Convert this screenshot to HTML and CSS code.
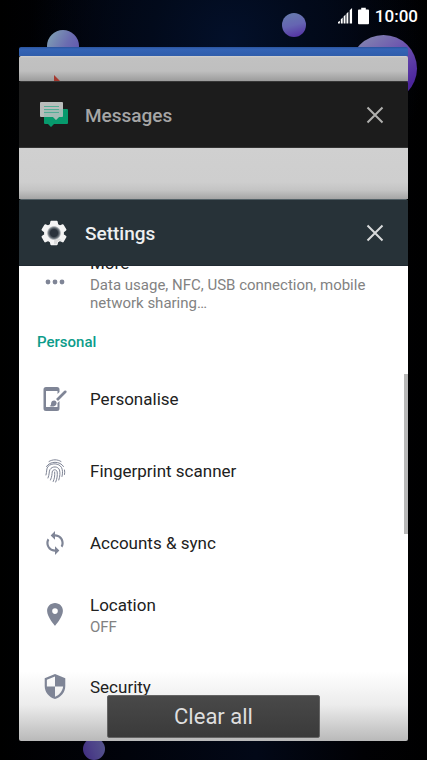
FILE: index.html
```html
<!DOCTYPE html>
<html lang="en">
<head>
<meta charset="utf-8">
<meta name="viewport" content="width=device-width, initial-scale=1">
<title>Recent apps</title>
<link rel="stylesheet" href="styles.css">
</head>
<body>
<div class="screen">
  <div class="wallpaper" aria-hidden="true">
    <span class="planet planet-left"></span>
    <span class="planet planet-top"></span>
    <span class="planet planet-right"></span>
    <span class="planet planet-bottom"></span>
  </div>

  <header class="status">
    <svg class="signal" viewBox="0 0 16 17" aria-label="Signal"><path fill="#fff" d="M0 17v-1.500l2-1.500V17zM3 17v-4.500l2-2V17zM6 17V9.500l2-2V17zM9 17V6.500l2-2V17zM12.500 17V3L15 .5V17z"/></svg>
    <svg class="battery" viewBox="0 0 12 18" aria-label="Battery"><path fill="#fff" d="M3.500 0h5v2H11q1 0 1 1v14q0 1-1 1H1q-1 0-1-1V3q0-1 1-1h2.500z"/></svg>
    <time class="clock">10:00</time>
  </header>

  <main class="stack">
    <section class="card card-blue"></section>
    <section class="card card-grey">
      <svg class="flag" viewBox="0 0 7 7" aria-hidden="true"><path fill="#a5392f" d="M0 0l7 7H0z"/></svg>
    </section>

    <section class="card card-messages">
      <div class="card-head">
        <svg class="app-icon" viewBox="0 0 30 30" aria-hidden="true">
          <path fill="#079a6d" d="M6 9h22q1 0 1 1v13q0 1-1 1H15l-3 3-3-3H6q-1 0-1-1V10z"/>
          <path fill="#b9bdbc" d="M2 2h21q1 0 1 1v13q0 1-1 1h-3l-3 3-3-3H2q-1 0-1-1V3q0-1 1-1z"/>
          <path fill="#5db79f" d="M5 9h19v7q0 1-1 1h-3l-3 3-3-3H5z" opacity=".25"/>
          <path stroke="#51ad96" stroke-width="1" d="M5 6.500h15M5 9.500h15M5 12.500h15"/>
        </svg>
        <h2 class="app-name">Messages</h2>
        <button class="close" type="button" aria-label="Dismiss Messages"><svg viewBox="0 0 18 18"><path d="M1.500 1.500l15 15m0-15l-15 15"/></svg></button>
      </div>
      <div class="peek"></div>
    </section>

    <section class="card card-settings">
      <div class="card-head">
        <svg class="app-icon" viewBox="-1.500 -1 33 33" aria-hidden="true">
          <defs><radialGradient id="hub"><stop offset=".5" stop-color="#2b333c"/><stop offset=".75" stop-color="#6b737a"/><stop offset="1" stop-color="#f2f2f2"/></radialGradient></defs>
          <path fill="#f4f4f4" stroke="#f4f4f4" stroke-width="2" stroke-linejoin="round" d="M12 3h6l.7 3.600 2.600 1.500 3.400-1.300 3 5.200-2.800 2.300v3l2.800 2.300-3 5.200-3.400-1.300-2.600 1.500L18 28h-6l-.7-3-2.600-1.500-3.400 1.300-3-5.200 2.800-2.300v-3L2.300 12l3-5.200 3.400 1.300 2.600-1.500z"/>
          <path fill="#dcdcdc" d="M19 20l5.700 4.800-3.400-1.300-2.600 1.500L18 28h-3v-6z"/>
          <circle cx="15" cy="15.500" r="8" fill="url(#hub)"/>
        </svg>
        <h2 class="app-name">Settings</h2>
        <button class="close" type="button" aria-label="Dismiss Settings"><svg viewBox="0 0 18 18"><path d="M1.500 1.500l15 15m0-15l-15 15"/></svg></button>
      </div>
      <div class="viewport">
        <div class="more">
          <svg class="icon" viewBox="0 0 24 24" aria-hidden="true"><circle cx="5" cy="12" r="2.400"/><circle cx="12" cy="12" r="2.400"/><circle cx="19" cy="12" r="2.400"/></svg>
          <div class="label"><span class="title">More</span><span class="note">Data usage, NFC, USB connection, mobile network sharing…</span></div>
        </div>
        <h3 class="group">Personal</h3>
        <ul class="rows">
          <li class="row">
            <svg class="icon" viewBox="0 0 24 26" aria-hidden="true"><path d="M3 1H14q2.500 0 2.500 2.500V6L14.500 8V5H3v16h11.500v-4l2-2v7.500Q16.500 25 14 25H3Q.5 25 .5 22.500v-19Q.5 1 3 1z"/><path d="M21.300 4.800q1-.8 1.900 0t0 1.900l-8.200 8.300-2-2zM11.200 14.500c2 .2 3 2 2 4-1.200 2.300-4.200 2.500-6.700 1.500 2-.5 1.300-2 1.700-3.300.4-1.500 1.600-2.300 3-2.200z"/></svg>
            <div class="label"><span class="title">Personalise</span></div>
          </li>
          <li class="row">
            <svg class="icon icon-line" viewBox="0 0 24 26" aria-hidden="true"><path d="M6 3.500C9.500 1.200 14.500 1.200 18 3.500M3.500 8.500C7 2.800 17 2.800 20.500 8.500M3 17c1-4 .3-6.500 2-8.500C8.500 4.700 16 5 18.500 9.500c1 2 1.500 5 .5 9M5 20c1.700-4 .8-6.500 2-8.500C9.300 8 15 8 16.500 12c.8 3 .5 6-.7 10M7.500 22c1.500-3.500 1.500-6 1.700-8 .5-3 4.500-3 5 0 .3 3.500 0 6.500-1.500 10M11.700 14c.2 4-.2 6.500-1.500 9.500M21.500 12c.3 1.500.3 3 0 4.500"/></svg>
            <div class="label"><span class="title">Fingerprint scanner</span></div>
          </li>
          <li class="row">
            <svg class="icon" viewBox="1 0 22 24" aria-hidden="true"><path d="M12 4V1L8 5l4 4V6c3.310 0 6 2.690 6 6 0 1.010-.25 1.970-.7 2.800l1.460 1.460C19.540 15.030 20 13.570 20 12c0-4.420-3.580-8-8-8zm0 14c-3.310 0-6-2.690-6-6 0-1.010.25-1.970.7-2.800L5.240 7.740C4.460 8.970 4 10.430 4 12c0 4.420 3.580 8 8 8v3l4-4-4-4v3z"/></svg>
            <div class="label"><span class="title">Accounts &amp; sync</span></div>
          </li>
          <li class="row">
            <svg class="icon" viewBox="1 0 22 24" aria-hidden="true"><path d="M12 1C7.800 1 4.700 4.300 4.700 8.300 4.700 13.800 12 22 12 22s7.300-8.200 7.300-13.700C19.300 4.300 16.200 1 12 1zm0 10a2.600 2.600 0 1 1 0-5.200 2.600 2.600 0 0 1 0 5.200z"/></svg>
            <div class="label"><span class="title">Location</span><span class="note">OFF</span></div>
          </li>
          <li class="row">
            <svg class="icon" viewBox="1 0 22 24" aria-hidden="true"><path d="M12 0L2.500 4v7c0 5.550 4.100 10.740 9.500 12 5.400-1.260 9.500-6.450 9.500-12V4L12 0zm0 11.500h7.500c-.53 4.120-3.500 8.200-7.500 9.400V11.500H4.500V5.300L12 2.200v9.300z"/></svg>
            <div class="label"><span class="title">Security</span></div>
          </li>
        </ul>
        <span class="scrollbar"></span>
      </div>
    </section>
  </main>

  <button class="clear" type="button">Clear all</button>
</div>
</body>
</html>
```
FILE: styles.css
```css
* {
  box-sizing: border-box;
}

body {
  margin: 0;
  background: #000;
  font-family: Roboto, "Liberation Sans", sans-serif;
}

h2, h3, ul {
  margin: 0;
  padding: 0;
}

button {
  border: 0;
  padding: 0;
  font: inherit;
  cursor: pointer;
}

svg {
  display: block;
  flex: none;
}

.screen {
  position: relative;
  display: flex;
  flex-direction: column;
  min-height: 100vh;
  padding-bottom: 19px;
  overflow: hidden;
}

.wallpaper {
  position: absolute;
  inset: 0;
  background:
    radial-gradient(circle at 54% 40px, #03102a, #020a1b 80px, transparent 200px),
    linear-gradient(90deg, #000, #01030b 30%, #020817 60%, #010104 85%, #000);
}

.planet {
  position: absolute;
  border-radius: 50%;
}

.planet-left {
  left: 47px;
  top: 30px;
  width: 32px;
  height: 32px;
  background: linear-gradient(120deg, #7d9cb4 10%, #6b6cb0 55%, #5f4fae);
}

.planet-top {
  right: 121px;
  top: 13px;
  width: 24px;
  height: 24px;
  background: linear-gradient(165deg, #6678ae 10%, #6565b2 50%, #5636a5 90%);
}

.planet-right {
  right: 10px;
  top: 35px;
  width: 67px;
  height: 67px;
  background: linear-gradient(145deg, #8284b0 10%, #6a4fae 45%, #4c259c 80%);
}

.planet-bottom {
  left: 83px;
  bottom: 0;
  width: 22px;
  height: 22px;
  background: linear-gradient(70deg, #402c80, #4d4389 50%, #55568b);
}

.status {
  position: relative;
  display: flex;
  justify-content: flex-end;
  align-items: center;
  height: 31px;
  padding-right: 9px;
  color: #fff;
}

.signal {
  width: 15px;
  height: 17px;
  margin-right: 5px;
}

.battery {
  width: 11px;
  height: 18px;
  margin-right: 6px;
}

.clock {
  font-size: 17px;
  font-weight: 500;
  line-height: 20px;
}

.stack {
  position: relative;
  flex: 1;
  display: flex;
  flex-direction: column;
  margin: 16px 19px 0;
}

.card {
  border-radius: 2px 2px 0 0;
}

.card-blue {
  height: 9px;
  background: linear-gradient(#2b539c, #3464b6 2px, #305dab);
}

.card-grey {
  height: 25px;
  padding: 19px 35px 0;
  overflow: hidden;
  background: linear-gradient(#d0d0d0, #c1c1c1 2px, #bfbfbf 15px, #9c9c9c);
}

.flag {
  width: 7px;
  height: 7px;
}

.card-head {
  display: flex;
  align-items: center;
  height: 67px;
  padding: 0 24px 0 20px;
  border-radius: 2px 2px 0 0;
}

.card-messages .card-head {
  background: #1c1c1c;
  border-top: 1px solid #363636;
  border-bottom: 1px solid #343434;
  color: #a6a6a6;
}

.peek {
  height: 51px;
  background: linear-gradient(#d0d0d0, #cecece 34px, #c4c4c4 42px, #a5a5a5);
}

.card-settings {
  flex: 1;
  display: flex;
  flex-direction: column;
  border-radius: 2px;
  overflow: hidden;
}

.card-settings .card-head {
  background: #273238;
  border-top: 1px solid #536066;
  border-bottom: 1px solid #202a32;
  color: #eeeff0;
}

.app-icon {
  width: 30px;
  height: 30px;
  margin-right: 16px;
}

.app-name {
  flex: 1;
  padding-top: 2px;
  font-size: 19px;
  font-weight: 500;
  line-height: 24px;
}

.close {
  background: none;
  color: #b0b0ae;
}

.card-settings .close {
  color: #d8dadb;
}

.close svg {
  width: 18px;
  height: 18px;
  fill: none;
  stroke: currentColor;
  stroke-width: 2;
}

.viewport {
  position: relative;
  flex: 1;
  overflow: hidden;
  background: linear-gradient(#fff, #fff calc(100% - 70px), #ececec calc(100% - 36px), #b9b9b9);
}

/* The list is scrolled, so the first row starts above the card's edge. */
.more {
  display: flex;
  align-items: center;
  margin-top: -14px;
  padding: 0 24px;
}

.icon {
  width: 24px;
  height: 26px;
  margin-right: 23px;
  fill: #7f8596;
}

.icon-line {
  fill: none;
  stroke: #7f8596;
  stroke-width: 1;
  stroke-linecap: round;
}

.label {
  display: flex;
  flex-direction: column;
  gap: 2px;
}

.title {
  color: #212121;
  font-size: 17px;
  line-height: 22px;
}

.note {
  color: #828282;
  font-size: 15px;
  line-height: 18px;
}

.group {
  padding: 20px 18px 11px;
  color: #0c9c8a;
  font-size: 15px;
  font-weight: 500;
  line-height: 20px;
}

.rows {
  list-style: none;
}

.row {
  display: flex;
  align-items: center;
  height: 72px;
  padding: 0 24px;
}

.scrollbar {
  position: absolute;
  right: 0;
  top: 108px;
  width: 4px;
  height: 160px;
  background: #b8b8b8;
}

.clear {
  position: absolute;
  left: 25%;
  right: 25%;
  bottom: 22px;
  height: 43px;
  border: 1px solid #646464;
  border-radius: 2px;
  background: linear-gradient(#494949, #3a3a3a);
  color: #dedede;
  font-size: 22px;
  line-height: 42px;
}
```
